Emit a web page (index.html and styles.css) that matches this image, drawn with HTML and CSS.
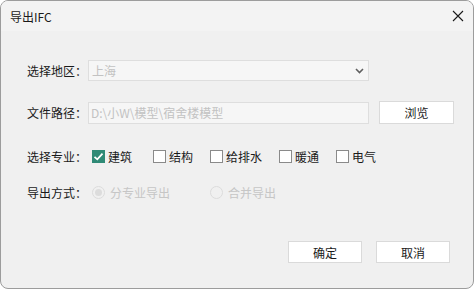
FILE: index.html
```html
<!DOCTYPE html>
<html lang="zh-CN">
<head>
<meta charset="UTF-8">
<title>导出IFC</title>
<link rel="stylesheet" href="styles.css">
</head>
<body>

<div class="window">
    <div class="titlebar">
        <span class="title">导出IFC</span>
        <svg class="close" width="12" height="12" viewBox="0 0 12 12">
            <path d="M1 1L11 11M11 1L1 11" stroke="#1a1a1a" stroke-width="1.1" fill="none"/>
        </svg>
    </div>
    <div class="content">
        <div class="row row-area">
            <span class="label">选择地区：</span>
            <div class="combo">
                <span>上海</span>
                <svg width="9" height="6" viewBox="0 0 9 6">
                    <path d="M1 1L4.5 4.5L8 1" stroke="#606060" stroke-width="1.6" fill="none"/>
                </svg>
            </div>
        </div>

        <div class="row row-path">
            <span class="label">文件路径：</span>
            <div class="textbox">D:\小W\模型\宿舍楼模型</div>
            <button class="btn browse">浏览</button>
        </div>

        <div class="row row-major">
            <span class="label">选择专业：</span>
            <label class="check first"><span class="box checked">
                <svg width="13" height="13" viewBox="0 0 13 13">
                    <path d="M2.5 6.8L5.3 9.3L10.5 3.6" stroke="#fff" stroke-width="1.8" fill="none"/>
                </svg>
            </span>建筑</label>
            <label class="check"><span class="box"></span>结构</label>
            <label class="check"><span class="box"></span>给排水</label>
            <label class="check"><span class="box"></span>暖通</label>
            <label class="check"><span class="box"></span>电气</label>
        </div>

        <div class="row row-mode">
            <span class="label">导出方式：</span>
            <label class="radio first"><span class="dot on"></span>分专业导出</label>
            <label class="radio"><span class="dot"></span>合并导出</label>
        </div>

        <div class="actions">
            <button class="btn">确定</button>
            <button class="btn">取消</button>
        </div>
    </div>
</div>

</body>
</html>
```

FILE: styles.css
```css
body {
    margin: 0;
    padding: 0;
    background: #ffffff;
    font-family: "Noto Sans CJK SC", "Noto Sans", sans-serif;
    font-size: 12px;
    color: #1a1a1a;
}

.window {
    width: 474px;
    height: 289px;
    box-sizing: border-box;
    border: 1px solid #9c9c9c;
    border-radius: 8px;
    background: #f0f0f0;
    overflow: hidden;
    display: flex;
    flex-direction: column;
}

.titlebar {
    height: 30px;
    background: #f3f3f3;
    display: flex;
    align-items: center;
    justify-content: space-between;
    padding: 0 9px 0 9px;
    flex-shrink: 0;
}

.title {
    font-size: 12px;
    color: #1a1a1a;
}

.close {
    margin-right: 0;
}

.content {
    padding-left: 26px;
    display: flex;
    flex-direction: column;
}

.row {
    display: flex;
    align-items: center;
}

.label {
    width: 61px;
    flex-shrink: 0;
}

.row-area {
    margin-top: 29px;
    height: 21px;
}

.combo {
    width: 281px;
    height: 21px;
    box-sizing: border-box;
    border: 1px solid #dedede;
    background: #f6f6f6;
    color: #c2c2c2;
    display: flex;
    align-items: center;
    justify-content: space-between;
    padding: 0 4px 0 3px;
}

.row-path {
    margin-top: 20px;
    height: 23px;
}

.textbox {
    width: 281px;
    height: 22px;
    box-sizing: border-box;
    border: 1px solid #dedede;
    background: #f6f6f6;
    color: #c2c2c2;
    padding-left: 2px;
    line-height: 20px;
}

.btn {
    font-family: inherit;
    font-size: 12px;
    color: #1a1a1a;
    width: 75px;
    height: 23px;
    background: #ffffff;
    border: 1px solid #dadada;
    padding: 0;
}

.browse {
    margin-left: 10px;
}

.row-major {
    margin-top: 22px;
    height: 20px;
}

.check {
    display: flex;
    align-items: center;
    margin-right: 17px;
}

.check.first {
    margin-left: 4px;
    margin-right: 21px;
}

.box {
    width: 13px;
    height: 13px;
    box-sizing: border-box;
    border: 1px solid #8a8a8a;
    background: #ffffff;
    margin-right: 3px;
    display: flex;
}

.box.checked {
    border: none;
    background: #2f8a76;
}

.row-mode {
    margin-top: 16px;
    height: 20px;
}

.radio {
    display: flex;
    align-items: center;
    color: #c6c6c6;
}

.radio.first {
    margin-left: 4px;
    width: 118px;
}

.dot {
    width: 13px;
    height: 13px;
    box-sizing: border-box;
    border: 1px solid #dcdcdc;
    border-radius: 50%;
    background: #f0f0f0;
    margin-right: 5px;
    display: flex;
    align-items: center;
    justify-content: center;
}

.dot.on::after {
    content: "";
    width: 7px;
    height: 7px;
    border-radius: 50%;
    background: #dcdcdc;
}

.actions {
    margin-top: 39px;
    display: flex;
    justify-content: flex-end;
    gap: 14px;
    padding-right: 23px;
}

.actions .btn {
    height: 22px;
    width: 74px;
}
```
